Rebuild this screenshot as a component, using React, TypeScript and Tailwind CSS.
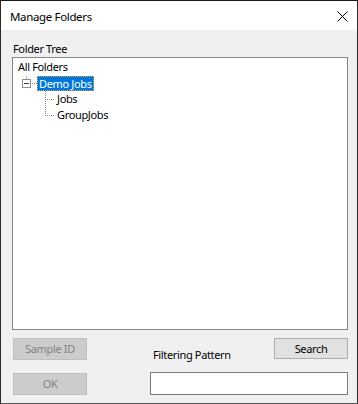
import React from "react";

const font = { fontFamily: '"Noto Sans", "Open Sans", sans-serif' };

function Dotted({ x1, y1, x2, y2 }: { x1: number; y1: number; x2: number; y2: number }) {
  const pts: React.ReactElement[] = [];
  if (x1 === x2) {
    for (let y = y1; y <= y2; y += 2) pts.push(<rect key={y} x={x1} y={y} width={1} height={1} fill="#8a8a8a" />);
  } else {
    for (let x = x1; x <= x2; x += 2) pts.push(<rect key={x} x={x} y={y1} width={1} height={1} fill="#8a8a8a" />);
  }
  return <>{pts}</>;
}

export default function App() {
  return (
    <div
      className="w-[358px] h-[404px] flex flex-col border border-t-[#1a1a1a] border-l-[#2a2a2a] border-r-[#2a2a2a] border-b-[#555555] bg-[#f0f0f0] text-[11px] tracking-[-0.35px] text-black"
      style={font}
    >
      {/* Title bar */}
      <div className="h-[29px] bg-white flex items-center justify-between pl-[9px] pr-[9px]">
        <span className="text-[11.5px] leading-[16px] mt-[2px]">Manage Folders</span>
        <svg width="11" height="11" viewBox="0 0 11 11" className="mt-[2px]">
          <path d="M0.5 0.5 L10.5 10.5 M10.5 0.5 L0.5 10.5" stroke="#000" strokeWidth="1" />
        </svg>
      </div>

      {/* Body */}
      <div className="flex-1 flex flex-col pl-[11px] pr-[9px] pt-[11px]">
        <div className="h-[16px] leading-[16px] pl-[1px]">Folder Tree</div>
        <div className="h-[273px] border border-[#828790] bg-white pt-[1px]">
          <div className="h-[16px] leading-[16px] pl-[5px]">All Folders</div>
          <div className="h-[16px] flex items-center">
            <svg width="24" height="16" viewBox="0 0 24 16" className="shrink-0">
              <Dotted x1={13} y1={-3} x2={13} y2={3} />
              <rect x="9.5" y="4.5" width="8" height="8" fill="#fff" stroke="#8f8f8f" />
              <rect x="11" y="8" width="5" height="1" fill="#3a3a3a" />
              <Dotted x1={19} y1={8} x2={23} y2={8} />
            </svg>
            <span className="h-[15px] leading-[13px] px-[1px] bg-[#0078d7] text-white border border-dotted border-[#f0a040]">
              Demo Jobs
            </span>
          </div>
          <div className="h-[16px] flex items-center">
            <svg width="44" height="16" viewBox="0 0 44 16" className="shrink-0">
              <Dotted x1={32} y1={0} x2={32} y2={15} />
              <Dotted x1={32} y1={8} x2={40} y2={8} />
            </svg>
            <span className="leading-[16px]">Jobs</span>
          </div>
          <div className="h-[16px] flex items-center">
            <svg width="44" height="16" viewBox="0 0 44 16" className="shrink-0">
              <Dotted x1={32} y1={0} x2={32} y2={8} />
              <Dotted x1={32} y1={8} x2={40} y2={8} />
            </svg>
            <span className="leading-[16px]">GroupJobs</span>
          </div>
        </div>

        {/* Bottom controls */}
        <div className="mt-[8px] flex items-start">
          <button className="ml-[1px] w-[74px] h-[22px] bg-[#cccccc] border border-[#bfbfbf] text-[#838383] leading-[18px]">
            Sample ID
          </button>
          <span className="ml-[66px] mt-[9px] leading-[15px]">Filtering Pattern</span>
          <button className="ml-auto w-[74px] h-[21px] bg-[#e1e1e1] border border-[#adadad] leading-[17px]">
            Search
          </button>
        </div>
        <div className="mt-[10px] flex items-start">
          <button className="ml-[1px] mt-[1px] w-[74px] h-[22px] bg-[#cccccc] border border-[#bfbfbf] text-[#838383] leading-[18px]">
            OK
          </button>
          <input
            className="ml-auto w-[198px] h-[23px] bg-white border border-[#7a7a7a] outline-none px-[2px] text-[11px]"
            style={font}
          />
        </div>
      </div>
    </div>
  );
}
